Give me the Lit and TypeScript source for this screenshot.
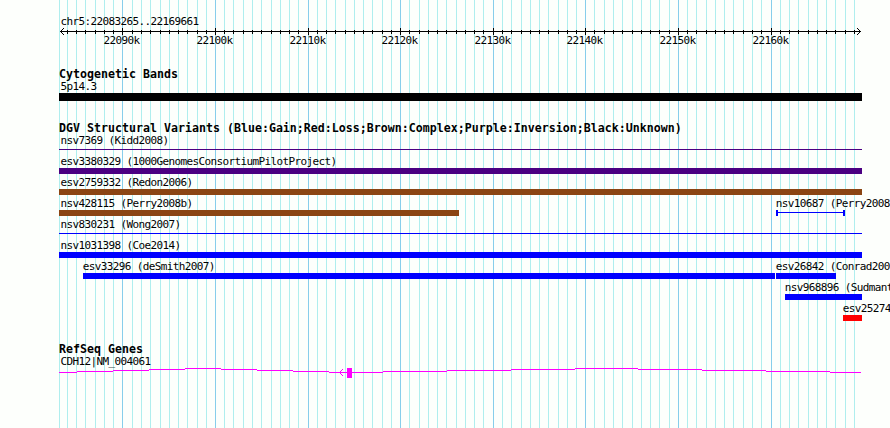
import { LitElement, html, svg, css } from "lit";
import { customElement, property } from "lit/decorators.js";

const ORIGIN = 59;
const MAJOR = [122, 215, 308, 400, 493, 585, 678, 771];
const GRID = [
  59, 67, 76, 85, 95, 104, 113, 122, 132, 141, 150, 160, 169, 178, 187, 197, 206, 215, 224, 233, 243,
  252, 261, 271, 280, 289, 298, 308, 317, 326, 335, 345, 354, 363, 372, 382, 391, 400, 409, 419, 428,
  437, 446, 456, 465, 474, 483, 493, 502, 511, 521, 530, 539, 548, 558, 567, 576, 585, 594, 604, 613,
  622, 632, 641, 650, 659, 669, 678, 687, 696, 706, 715, 724, 733, 743, 752, 761, 771, 780, 789, 798,
  808, 817, 826, 835, 845, 854,
];

interface Feature {
  name: string;
  start: number;
  end: number;
  kind: "bar" | "band" | "line" | "range";
  color: string;
}

const PURPLE = "#4b0082";
const BROWN = "#8b4513";
const BLUE = "#0000ff";

const BANDS: Feature[][] = [[{ name: "5p14.3", start: 59, end: 862, kind: "band", color: "#000000" }]];

const VARIANTS: Feature[][] = [
  [{ name: "nsv7369 (Kidd2008)", start: 59, end: 862, kind: "line", color: PURPLE }],
  [{ name: "esv3380329 (1000GenomesConsortiumPilotProject)", start: 59, end: 862, kind: "bar", color: PURPLE }],
  [{ name: "esv2759332 (Redon2006)", start: 59, end: 862, kind: "bar", color: BROWN }],
  [
    { name: "nsv428115 (Perry2008b)", start: 59, end: 459, kind: "bar", color: BROWN },
    { name: "nsv10687 (Perry2008", start: 776, end: 845, kind: "range", color: BLUE },
  ],
  [{ name: "nsv830231 (Wong2007)", start: 59, end: 862, kind: "line", color: BLUE }],
  [{ name: "nsv1031398 (Coe2014)", start: 59, end: 862, kind: "bar", color: BLUE }],
  [
    { name: "esv33296 (deSmith2007)", start: 83, end: 775, kind: "bar", color: BLUE },
    { name: "esv26842 (Conrad200", start: 776, end: 836, kind: "bar", color: BLUE },
  ],
  [{ name: "nsv968896 (Sudmant", start: 785, end: 862, kind: "bar", color: BLUE }],
  [{ name: "esv25274", start: 843, end: 862, kind: "bar", color: "#ff0000" }],
];

// Stair-stepped intron line: [start x, y inside the glyph box]
const INTRON: [number, number][] = [
  [59, 4], [77, 3], [113, 2], [149, 1], [185, 0], [221, 1], [257, 2], [293, 3], [329, 4],
  [383, 3], [447, 2], [511, 1], [575, 0], [638, 1], [702, 2], [766, 3], [830, 4], [861, 4],
];

@customElement("genome-grid")
class GenomeGrid extends LitElement {
  static styles = css`
    :host { display: block; }
    svg { display: block; }
    .minor { fill: #afeeee; }
    .major { fill: #87ceeb; }
  `;
  render() {
    return html`<svg width="803" height="428" shape-rendering="crispEdges">
      ${GRID.map((x) => svg`<rect class=${MAJOR.includes(x) ? "major" : "minor"} x=${x - ORIGIN} y="0" width="1" height="428"></rect>`)}
    </svg>`;
  }
}

@customElement("genome-ruler")
class GenomeRuler extends LitElement {
  static styles = css`
    :host { display: block; height: 53px; }
    .region { height: 13px; line-height: 13px; padding-left: 1.4px; }
    svg { display: block; }
    .labels { display: grid; height: 13px; margin-top: -2px; }
    .label { grid-area: 1 / 1; width: 38px; line-height: 13px; }
  `;
  render() {
    return html`
      <div class="region">chr5:22083265..22169661</div>
      <svg width="803" height="8" shape-rendering="crispEdges">
        <rect x="1" y="3" width="801" height="1"></rect>
        ${GRID.slice(1).map((x) =>
          MAJOR.includes(x)
            ? svg`<rect x=${x - ORIGIN} y="0" width="1" height="7"></rect>`
            : svg`<rect x=${x - ORIGIN} y="2" width="1" height="4"></rect>`
        )}
        ${[1, 2, 3].map(
          (d) => svg`
            <rect x=${1 + d} y=${3 - d} width="1" height="1"></rect>
            <rect x=${1 + d} y=${3 + d} width="1" height="1"></rect>
            <rect x=${801 - d} y=${3 - d} width="1" height="1"></rect>
            <rect x=${801 - d} y=${3 + d} width="1" height="1"></rect>`
        )}
      </svg>
      <div class="labels">
        ${MAJOR.map((x, i) => html`<span class="label" style="margin-left:${x - 18.4 - ORIGIN}px">${22090 + i * 10}k</span>`)}
      </div>
    `;
  }
}

@customElement("genome-track")
class GenomeTrack extends LitElement {
  @property() heading = "";
  @property({ attribute: false }) rows: Feature[][] = [];

  static styles = css`
    :host { display: block; }
    .heading {
      height: 12px;
      line-height: 13px;
      font-size: 11.6px;
      font-weight: 700;
      letter-spacing: 0.016px;
    }
    .row { display: grid; height: 21px; }
    .feature { grid-area: 1 / 1; justify-self: start; }
    .name { height: 13px; line-height: 13px; margin-left: -0.3px; }
    .name.first { margin-left: 1.4px; }
    .bar { height: 6px; background: currentColor; }
    .band { height: 8px; background: currentColor; }
    .line { height: 1px; margin-top: 2px; background: currentColor; }
    .range {
      height: 6px;
      box-sizing: border-box;
      border: solid currentColor;
      border-width: 0 2px;
      background: linear-gradient(currentColor, currentColor) 0 2px / 100% 1px no-repeat;
    }
  `;
  render() {
    return html`
      <div class="heading">${this.heading}</div>
      ${this.rows.map(
        (row) => html`<div class="row">
          ${row.map(
            (f) => html`<div class="feature" style="margin-left:${f.start - ORIGIN}px">
              <div class="name ${f.start === ORIGIN ? "first" : ""}">${f.name}</div>
              <div class=${f.kind} style="width:${f.end - f.start}px;color:${f.color}"></div>
            </div>`
          )}
        </div>`
      )}
      <slot></slot>
    `;
  }
}

@customElement("gene-model")
class GeneModel extends LitElement {
  static styles = css`
    :host { display: block; }
    .name { height: 13px; line-height: 13px; padding-left: 1.4px; }
    svg { display: block; fill: #ff00ff; }
  `;
  render() {
    return html`
      <div class="name">CDH12|NM_004061</div>
      <svg width="803" height="10" shape-rendering="crispEdges">
        ${INTRON.slice(0, -1).map(
          ([x, y], i) => svg`<rect x=${x - ORIGIN} y=${y} width=${INTRON[i + 1][0] - x} height="1"></rect>`
        )}
        ${[0, 1, 2, 3].map((d) => {
          const x = 339 + d - ORIGIN;
          return svg`<rect x=${x} y=${4 - d} width="1" height="1"></rect><rect x=${x} y=${4 + d} width="1" height="1"></rect>`;
        })}
        <rect x="288" y="0" width="5" height="10"></rect>
      </svg>
    `;
  }
}

@customElement("app-root")
class AppRoot extends LitElement {
  static styles = css`
    :host {
      display: block;
      position: relative;
      box-sizing: border-box;
      width: 890px;
      height: 428px;
      padding: 15px 0 0 59px;
      overflow: hidden;
      background: #fdfffc;
      color: #000;
      font: 11px "DejaVu Sans Mono", "Liberation Mono", monospace;
      letter-spacing: -0.622px;
      white-space: nowrap;
    }
    .grid { position: absolute; left: 59px; top: 0; }
    .tracks { position: relative; display: flex; flex-direction: column; }
    .variants { margin-top: 21px; }
    .genes { margin-top: 20px; }
  `;
  render() {
    return html`
      <genome-grid class="grid"></genome-grid>
      <div class="tracks">
        <genome-ruler></genome-ruler>
        <genome-track heading="Cytogenetic Bands" .rows=${BANDS}></genome-track>
        <genome-track
          class="variants"
          heading="DGV Structural Variants (Blue:Gain;Red:Loss;Brown:Complex;Purple:Inversion;Black:Unknown)"
          .rows=${VARIANTS}
        ></genome-track>
        <genome-track class="genes" heading="RefSeq Genes"><gene-model></gene-model></genome-track>
      </div>
    `;
  }
}
